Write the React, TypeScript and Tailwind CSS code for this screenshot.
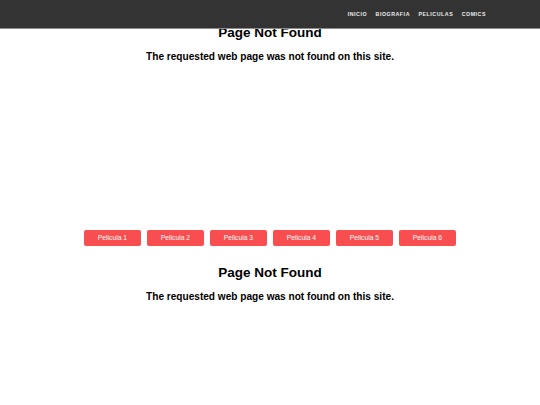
import React from "react";

const navItems = ["INICIO", "BIOGRAFIA", "PELICULAS", "COMICS"];
const films = ["Pelicula 1", "Pelicula 2", "Pelicula 3", "Pelicula 4", "Pelicula 5", "Pelicula 6"];

function NotFound({ className = "" }: { className?: string }) {
  return (
    <div className={`text-center text-black ${className}`}>
      <h1 className="text-[13.5px] leading-[16px] font-bold">Page Not Found</h1>
      <p className="mt-[10px] text-[10.1px] leading-[12px] font-bold">
        The requested web page was not found on this site.
      </p>
    </div>
  );
}

export default function App() {
  return (
    <div
      className="relative min-h-[405px] w-full bg-white"
      style={{ fontFamily: '"Liberation Sans", Arial, sans-serif' }}
    >
      {/* fixed top navigation bar */}
      <header className="fixed top-0 left-0 right-0 z-10 flex h-[29px] items-center justify-end border-b border-[#8c8c8c] bg-[#333333] pr-[54px]">
        <nav className="flex items-center gap-[8.5px]">
          {navItems.map((item) => (
            <span
              key={item}
              className="cursor-pointer text-[5.25px] leading-[8px] font-bold tracking-[0.55px] text-[#eeeeee]"
            >
              {item}
            </span>
          ))}
        </nav>
      </header>

      <main className="pt-[24.5px]">
        <NotFound />

        <div className="mt-[167.5px] flex justify-center gap-[5.5px]">
          {films.map((f) => (
            <button
              key={f}
              className="flex h-[16px] w-[57.5px] items-center justify-center rounded-[2px] bg-[#f84e50] text-[6.75px] text-white"
            >
              {f}
            </button>
          ))}
        </div>

        <NotFound className="mt-[18.5px]" />
      </main>
    </div>
  );
}
